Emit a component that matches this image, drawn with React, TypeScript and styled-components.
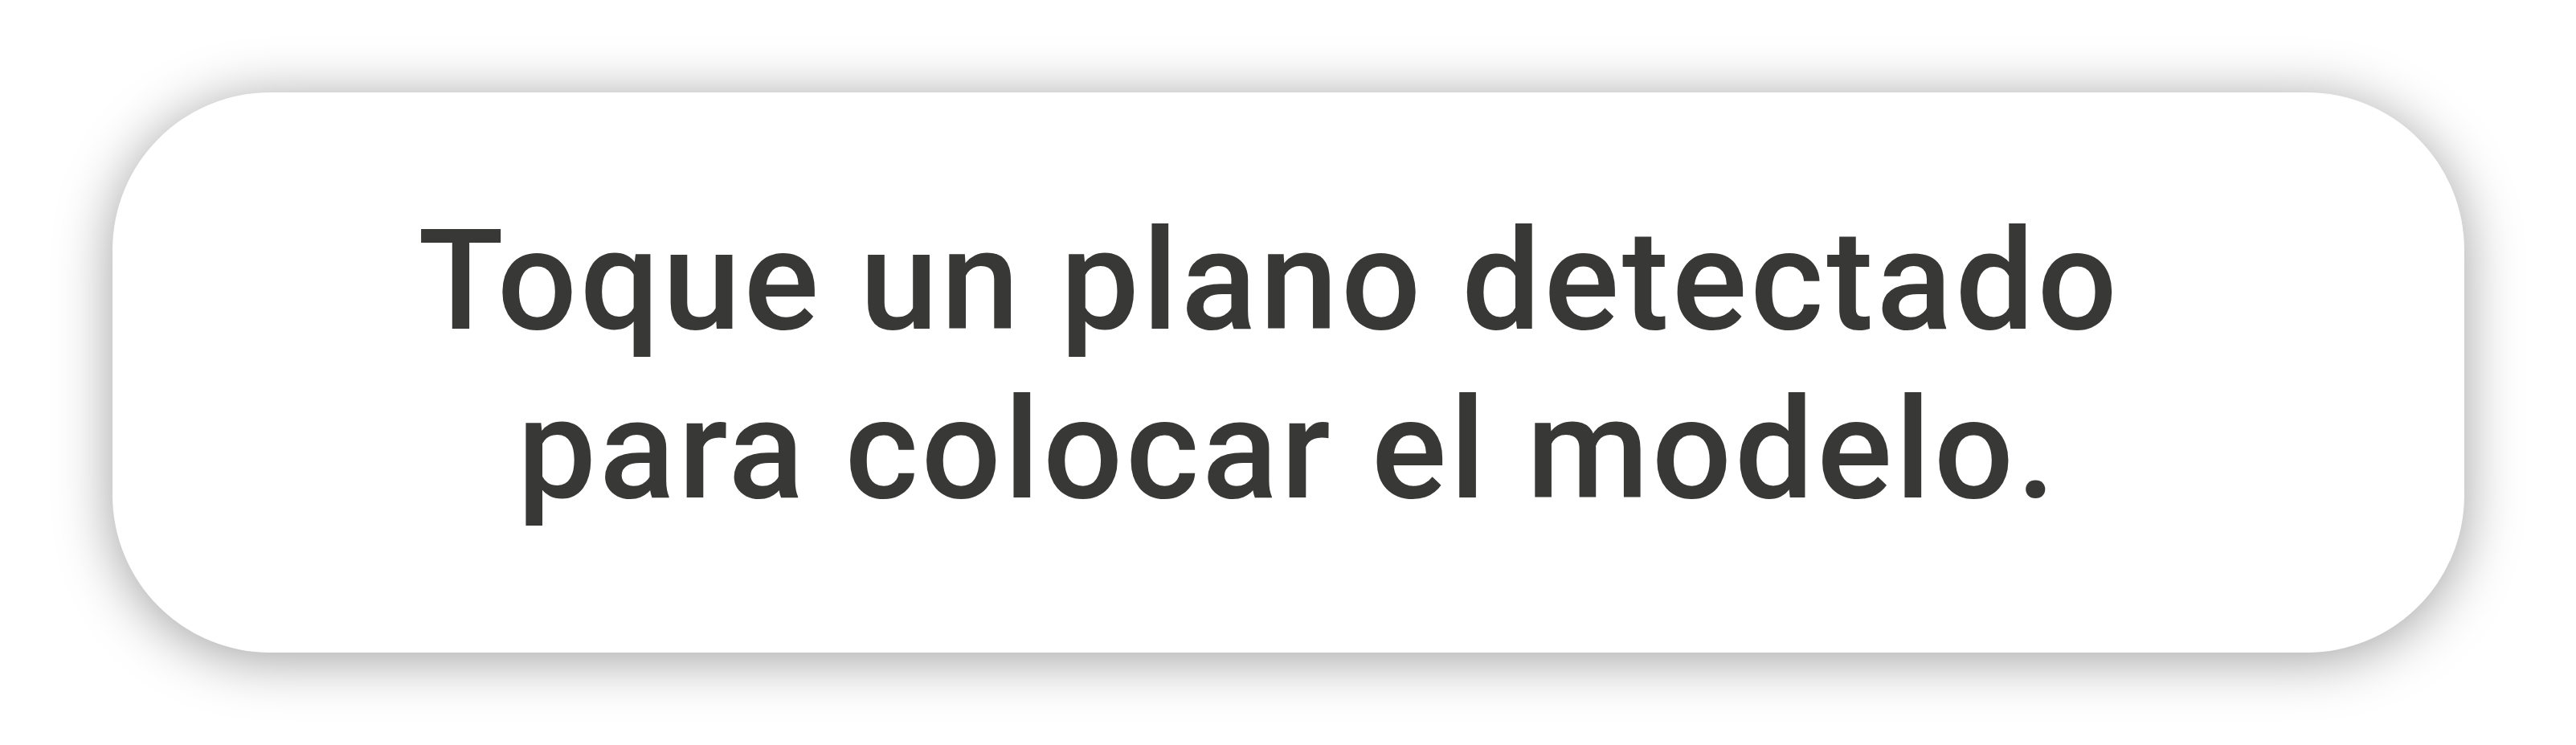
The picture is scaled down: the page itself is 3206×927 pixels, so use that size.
import React from "react";
import styled, { createGlobalStyle } from "styled-components";

const GlobalStyle = createGlobalStyle`
  html, body {
    margin: 0;
    padding: 0;
    background: #ffffff;
  }
`;

const Stage = styled.div`
  width: 3206px;
  height: 927px;
  display: flex;
  align-items: center;
  justify-content: center;
  background: #ffffff;
`;

const Card = styled.div`
  box-sizing: border-box;
  width: 2927px;
  height: 697px;
  border-radius: 196px;
  background: #ffffff;
  box-shadow: 0 8px 70px rgba(0, 0, 0, 0.38);
  display: flex;
  align-items: center;
  justify-content: center;
  padding: 0 360px;
`;

const Message = styled.p`
  margin: 0 0 17px;
  font-family: Roboto, "Liberation Sans", sans-serif;
  font-weight: 500;
  font-size: 175px;
  line-height: 210px;
  letter-spacing: 3.7px;
  color: #383836;
  text-align: center;
  white-space: break-spaces;
`;

export default function App() {
  return (
    <>
      <GlobalStyle />
      <Stage>
        <Card>
          <Message>Toque un plano detectado para colocar el modelo.</Message>
        </Card>
      </Stage>
    </>
  );
}
